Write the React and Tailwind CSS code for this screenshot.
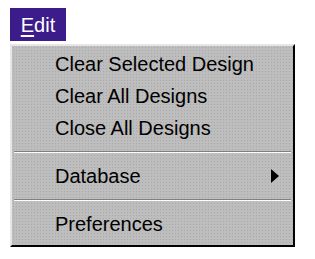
export default function App() {
  const row = "h-[32px] flex items-center pl-[43px] pr-[14px] text-[20px] text-black leading-none"
  const sep = (
    <div className="h-[16px] flex flex-col justify-center px-[2px]">
      <div className="h-px bg-[#808080]" />
      <div className="h-px bg-white" />
    </div>
  )
  return (
    <div className="w-[315px] h-[259px] bg-white pt-[8px] font-['Liberation_Sans',Arial,sans-serif]">
      <div className="ml-[10px] w-[56px] h-[33px] bg-[#3c1b8a] flex items-center justify-center text-white text-[20px]">
        <span><span className="underline underline-offset-[3px]">E</span>dit</span>
      </div>
      <div className="mt-[3px] ml-[10px] w-[285px] h-[203px] bg-[#bdbdbd] bg-[radial-gradient(#a9a9a9_0.8px,transparent_1px)] bg-[length:3px_3px] border-l-2 border-t-2 border-l-[#e6e6e6] border-t-[#e6e6e6] border-r-2 border-b-2 border-r-black border-b-black pt-[2px]">
        <div className={row}>Clear Selected Design</div>
        <div className={row}>Clear All Designs</div>
        <div className={row}>Close All Designs</div>
        {sep}
        <div className={row + " justify-between"}>
          <span>Database</span>
          <svg width="8" height="14" viewBox="0 0 8 14"><path d="M0 0 L8 7 L0 14 Z" fill="black" /></svg>
        </div>
        {sep}
        <div className={row}>Preferences</div>
      </div>
    </div>
  )
}
